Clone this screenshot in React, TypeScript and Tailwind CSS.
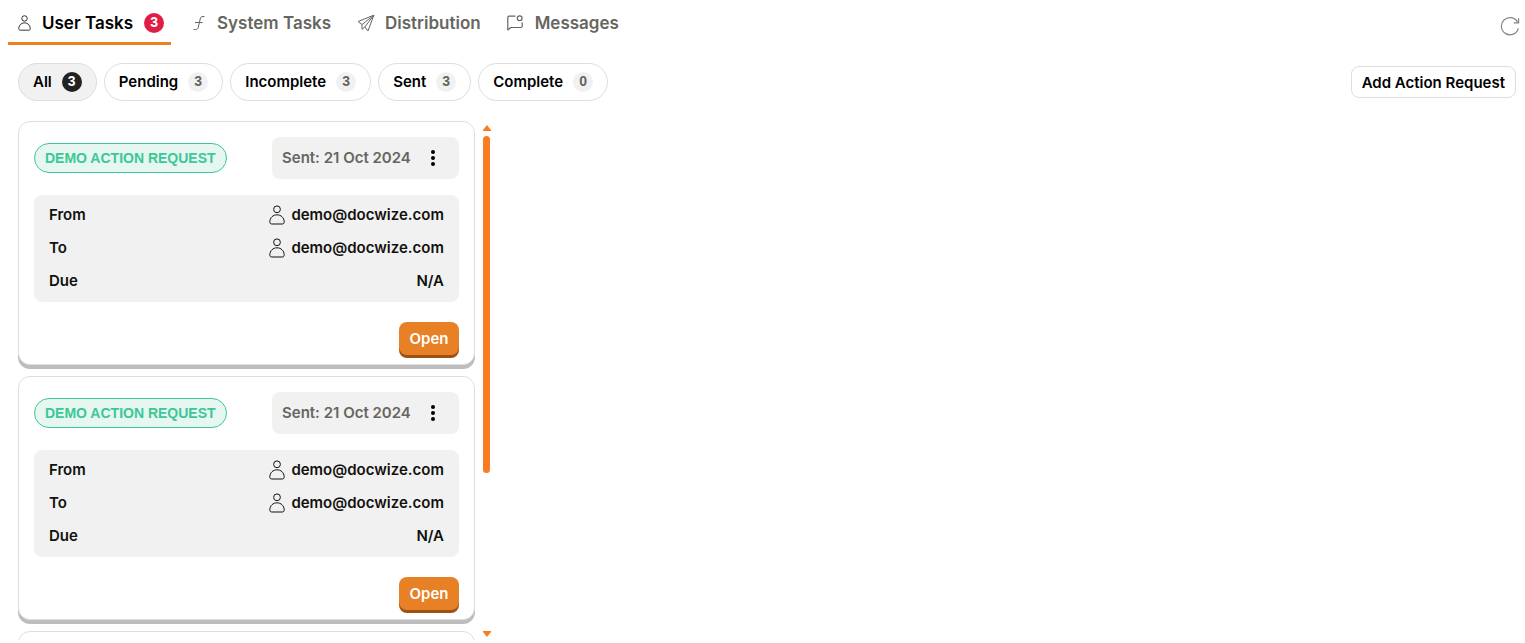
import React from "react";

type IconProps = { className?: string };

function UserIcon({ className }: IconProps) {
  return (
    <svg viewBox="0 0 16 20" fill="none" stroke="currentColor" className={className} aria-hidden="true">
      <circle cx="8" cy="4.3" r="3.4" />
      <path d="M8 9.8C4 9.8 1 12.6 .8 16.8c0 1.500.700 2.200 2 2.200h10.400c1.300 0 2-.7 2-2.200C15 12.600 12 9.800 8 9.800Z" />
    </svg>
  );
}

function FunctionIcon({ className }: IconProps) {
  return (
    <svg viewBox="0 0 12 16" fill="none" stroke="currentColor" className={className} aria-hidden="true">
      <path d="M11.500 1.500h-1.500C8.300 1.500 7.600 2.300 7.200 4L5.400 12C5 13.700 4.300 14.500 2.500 14.500H.5M2 7.500h7.500" />
    </svg>
  );
}

function SendIcon({ className }: IconProps) {
  return (
    <svg viewBox="0 0 18 18" fill="none" stroke="currentColor" strokeLinejoin="round" className={className} aria-hidden="true">
      <path d="M16.800 1.200 1 7.500l4 3L16.800 1.200 11 17l-3.200-4L16.800 1.200M5 10.500v4.800l2.800-2.300" />
    </svg>
  );
}

function MessageIcon({ className }: IconProps) {
  return (
    <svg viewBox="0 0 16 16" fill="none" stroke="currentColor" strokeWidth="1.200" strokeLinejoin="round" className={className} aria-hidden="true">
      <path d="M8.500 1.200H2C1.200 1.200.8 1.600.8 2.400V15l3-2.500H14c.8 0 1.200-.4 1.200-1.200V7.500" />
      <circle cx="12.700" cy="3.300" r="2.400" />
    </svg>
  );
}

function RefreshIcon({ className }: IconProps) {
  return (
    <svg viewBox="0 0 20 20" fill="none" stroke="currentColor" strokeWidth="1.200" className={className} aria-hidden="true">
      <path d="M18.300 12.300A8.600 8.600 0 1 1 17.500 6M18.600 2.300v4.600h-4.900" />
    </svg>
  );
}

const tabs = [
  { label: "User Tasks", Icon: UserIcon, icon: "h-4 w-[13px]", gap: "gap-[11px]", count: 3 },
  { label: "System Tasks", Icon: FunctionIcon, icon: "h-4 w-3", gap: "gap-3" },
  { label: "Distribution", Icon: SendIcon, icon: "size-[18px]", gap: "gap-2.5" },
  { label: "Messages", Icon: MessageIcon, icon: "size-4", gap: "gap-3" },
];

const filters = [
  { label: "All", count: 3 },
  { label: "Pending", count: 3 },
  { label: "Incomplete", count: 3 },
  { label: "Sent", count: 3 },
  { label: "Complete", count: 0 },
];

const requests = [
  { id: 1, title: "DEMO ACTION REQUEST", sent: "21 Oct 2024", from: "demo@docwize.com", to: "demo@docwize.com", due: "N/A" },
  { id: 2, title: "DEMO ACTION REQUEST", sent: "21 Oct 2024", from: "demo@docwize.com", to: "demo@docwize.com", due: "N/A" },
  { id: 3, title: "DEMO ACTION REQUEST", sent: "21 Oct 2024", from: "demo@docwize.com", to: "demo@docwize.com", due: "N/A" },
];

function Row({ label, value, person }: { label: string; value: string; person?: boolean }) {
  return (
    <div className="flex items-center justify-between">
      <dt>{label}</dt>
      <dd className="flex items-center gap-1.5">
        {person && <UserIcon className="h-5 w-4" />}
        {value}
      </dd>
    </div>
  );
}

function RequestCard({ request }: { request: (typeof requests)[number] }) {
  return (
    <article className="flex shrink-0 flex-col rounded-xl border border-[#dedede] bg-white p-[15px] pb-1.5 shadow-[0_4px_0_#bdbdbd]">
      <header className="flex items-center justify-between">
        <h2 className="rounded-full border border-[#3cc795] bg-[#e6f7f1] px-2.5 font-['Liberation_Sans',sans-serif] text-sm leading-7 font-bold text-[#3cc795]">
          {request.title}
        </h2>
        <div className="flex h-[42px] w-[187px] items-center justify-between rounded-lg bg-[#f1f1f1] pr-5 pl-2.5 text-[15px] font-semibold text-[#666660]">
          <span>Sent: {request.sent}</span>
          <button type="button" aria-label="More options" className="flex w-3 justify-center text-black">
            <svg viewBox="0 0 4 16" fill="currentColor" className="h-4 w-1" aria-hidden="true">
              <circle cx="2" cy="2" r="2" />
              <circle cx="2" cy="8" r="2" />
              <circle cx="2" cy="14" r="2" />
            </svg>
          </button>
        </div>
      </header>
      <dl className="mt-4 flex flex-col gap-[13px] rounded-lg bg-[#f1f1f1] px-[15px] pt-2.5 pb-[11px] text-[15px] leading-5 font-semibold text-[#11110d]">
        <Row label="From" value={request.from} person />
        <Row label="To" value={request.to} person />
        <Row label="Due" value={request.due} />
      </dl>
      <button type="button" className="mt-5 mb-[3px] h-[33px] w-[60px] self-end rounded-lg bg-[#e88126] pt-px text-[15px] font-semibold text-white shadow-[0_3px_0_#9b5213]">
        Open
      </button>
    </article>
  );
}

export default function App() {
  return (
    <div className="flex h-screen flex-col overflow-hidden bg-white pb-[3px] font-['Inter','Liberation_Sans',sans-serif] text-black">
      <div className="flex items-start justify-between pr-[5px] pl-2">
        <nav className="flex h-[45px] gap-4">
          {tabs.map(({ label, Icon, icon, gap, count }) => (
            <a
              key={label}
              href="#"
              className={
                count
                  ? `flex items-center border-b-3 border-[#ef8022] pt-1 pr-[7px] pl-2.5 text-[17px] font-semibold ${gap}`
                  : `flex items-center border-b-3 border-transparent pt-1 pr-1 pl-1.5 text-[17px] font-semibold text-[#666660] ${gap}`
              }
            >
              <Icon className={icon} />
              <span className="pt-px">{label}</span>
              {count && (
                <span className="flex size-5 items-center justify-center rounded-full bg-[#e01e45] pb-0.5 font-['Liberation_Sans',sans-serif] text-sm font-bold text-white">
                  {count}
                </span>
              )}
            </a>
          ))}
        </nav>
        <button type="button" aria-label="Refresh" className="mt-4 text-[#858585]">
          <RefreshIcon className="size-5" />
        </button>
      </div>

      <div className="mt-[18px] flex items-center justify-between pr-[9px] pl-[18px]">
        <div className="flex gap-[7px]">
          {filters.map(({ label, count }, i) => (
            <button
              key={label}
              type="button"
              className={
                i === 0
                  ? "flex h-[38px] items-center gap-2.5 rounded-full border border-[#dedede] bg-[#f1f1f1] px-3.5 text-[15px] font-semibold"
                  : "flex h-[38px] items-center gap-2.5 rounded-full border border-[#dedede] bg-white px-3.5 text-[15px] font-semibold"
              }
            >
              {label}
              <span
                className={
                  i === 0
                    ? "flex size-5 items-center justify-center rounded-full bg-[#222] pb-0.5 font-['Liberation_Sans',sans-serif] text-sm font-bold text-white"
                    : "flex size-5 items-center justify-center rounded-full bg-[#f1f1f1] pb-0.5 font-['Liberation_Sans',sans-serif] text-sm font-bold text-[#666660]"
                }
              >
                {count}
              </span>
            </button>
          ))}
        </div>
        <button type="button" className="h-8 rounded-lg border border-[#dedede] px-2.5 pt-0.5 text-[15px] font-semibold">
          Add Action Request
        </button>
      </div>

      <main className="mt-5 flex min-h-0 flex-1 gap-2 pl-[18px]">
        <section className="flex w-[457px] flex-col gap-[11px] overflow-y-auto [scrollbar-width:none]">
          {requests.map((request) => (
            <RequestCard key={request.id} request={request} />
          ))}
        </section>
        <div className="flex w-[7px] flex-col items-center pt-1 pb-[3px] text-[#fa7c20]" aria-hidden="true">
          <svg viewBox="0 0 8 6" fill="currentColor" className="h-1.5 w-2 shrink-0">
            <path d="M4 0 8 5v1H0V5Z" />
          </svg>
          <div className="mt-[5px] h-[337px] w-full rounded-full bg-[#fa7c20]" />
          <svg viewBox="0 0 8 6" fill="currentColor" className="mt-auto h-1.5 w-2 shrink-0">
            <path d="M0 0h8v1L4 6 0 1Z" />
          </svg>
        </div>
      </main>
    </div>
  );
}
